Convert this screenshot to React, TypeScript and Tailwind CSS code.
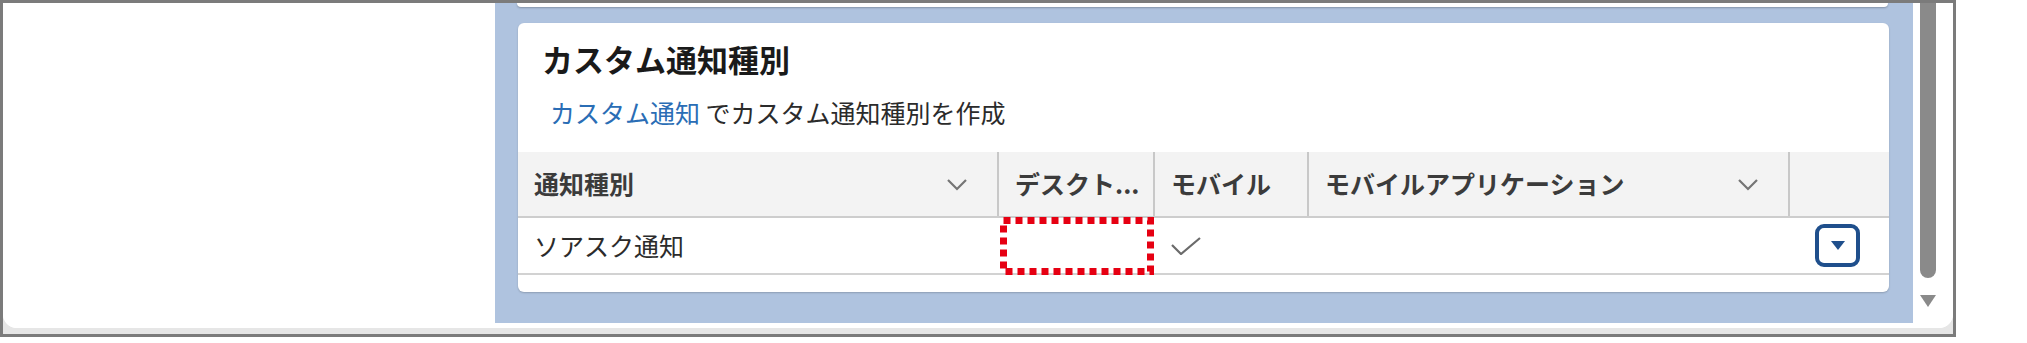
import React from "react";

const font = { fontFamily: '"Noto Sans CJK JP", "Noto Sans", sans-serif' };

// thin grey chevron used in the sortable column headers
function Chevron() {
  return (
    <svg width="22" height="13" viewBox="0 0 22 13" fill="none">
      <polyline points="2,2 11,11 20,2" stroke="#757575" strokeWidth="2.2" />
    </svg>
  );
}

function HeaderCell({
  label,
  width,
  chevron,
  divider = true,
}: {
  label: string;
  width: string;
  chevron?: boolean;
  divider?: boolean;
}) {
  return (
    <div className={`${width} h-full flex items-center pl-4 ${divider ? "border-r-2 border-[#c8c8c8]" : ""}`}>
      <span className="flex-1 text-[25px] font-bold text-[#3b3b3b] whitespace-nowrap">{label}</span>
      {chevron && (
        <span className="mr-[29px] flex items-center">
          <Chevron />
        </span>
      )}
    </div>
  );
}

export default function App() {
  return (
    <div className="w-[2027px] h-[343px] bg-white" style={font}>
      <div className="w-[1956px] h-[337px] border-[3px] border-[#7b7b7b] bg-[#e6e6e6] flex flex-col">
        <div className="h-[325px] flex bg-white rounded-b-[14px] overflow-hidden">
          {/* left empty pane */}
          <div className="w-[492px] h-full bg-white" />

          {/* blue content area */}
          <div className="w-[1418px] h-[320px] bg-[#afc3df] flex flex-col">
            {/* bottom edge of the card above */}
            <div className="ml-[22px] w-[1371px] h-[4px] bg-white rounded-b-[6px] shadow-[0_1px_2px_rgba(0,0,0,0.25)]" />

            {/* Custom notification types card */}
            <div className="mt-[16px] ml-[23px] w-[1371px] h-[269px] bg-white rounded-[6px] shadow-[0_1px_2px_rgba(0,0,0,0.2)] flex flex-col">
              <h2 className="mt-[15px] pl-[24px] h-[40px] flex items-center text-[31px] font-bold text-[#1a1a1a] leading-none">
                カスタム通知種別
              </h2>
              <p className="mt-[17px] pl-[32px] h-[34px] flex items-center text-[25px] text-[#2b2b2b] leading-none whitespace-nowrap">
                <span className="text-[#2a6db5]">カスタム通知</span>
                <span>&nbsp;でカスタム通知種別を作成</span>
              </p>

              {/* table header */}
              <div className="mt-[23px] h-[66px] bg-[#f3f3f3] border-b-2 border-[#cdcdcd] flex">
                <HeaderCell label="通知種別" width="w-[481px]" chevron />
                <HeaderCell label="デスクト..." width="w-[156px]" />
                <HeaderCell label="モバイル" width="w-[154px]" />
                <HeaderCell label="モバイルアプリケーション" width="w-[481px]" chevron />
                <div className="w-[99px] h-full" />
              </div>

              {/* row */}
              <div className="h-[57px] border-b-2 border-[#d2d2d2] flex items-center">
                <div className="w-[481px] pl-4 text-[25px] text-[#2b2b2b]">ソアスク通知</div>
                <div className="w-[156px] h-full relative">
                  <svg
                    className="absolute left-[1px] -top-[1px]"
                    width="154"
                    height="58"
                    viewBox="0 0 154 58"
                  >
                    <rect
                      x="3.5"
                      y="3.5"
                      width="147"
                      height="51"
                      fill="none"
                      stroke="#e60012"
                      strokeWidth="7"
                      strokeDasharray="7 5"
                    />
                  </svg>
                </div>
                <div className="w-[154px] pl-[16px] flex items-center">
                  <svg width="30" height="18" viewBox="0 0 30 18" fill="none">
                    <polyline points="1,8 10,17 29,1" stroke="#6b6b6b" strokeWidth="2.2" />
                  </svg>
                </div>
                <div className="w-[481px]" />
                <div className="w-[99px] pl-[25px] flex items-center">
                  <div className="w-[45px] h-[43px] border-4 border-[#1f4f8c] rounded-[9px] flex items-center justify-center">
                    <div className="w-0 h-0 border-l-[7px] border-r-[7px] border-t-[9px] border-l-transparent border-r-transparent border-t-[#1f4f8c]" />
                  </div>
                </div>
              </div>
            </div>
          </div>

          {/* scrollbar */}
          <div className="w-[40px] h-full bg-white flex flex-col items-start">
            <div className="ml-[7px] w-[16px] h-[275px] bg-[#8a8a8a] rounded-b-full" />
            <div className="mt-[17px] ml-[7px] w-0 h-0 border-l-[8px] border-r-[8px] border-t-[12px] border-l-transparent border-r-transparent border-t-[#8a8a8a]" />
          </div>
        </div>
      </div>
    </div>
  );
}
